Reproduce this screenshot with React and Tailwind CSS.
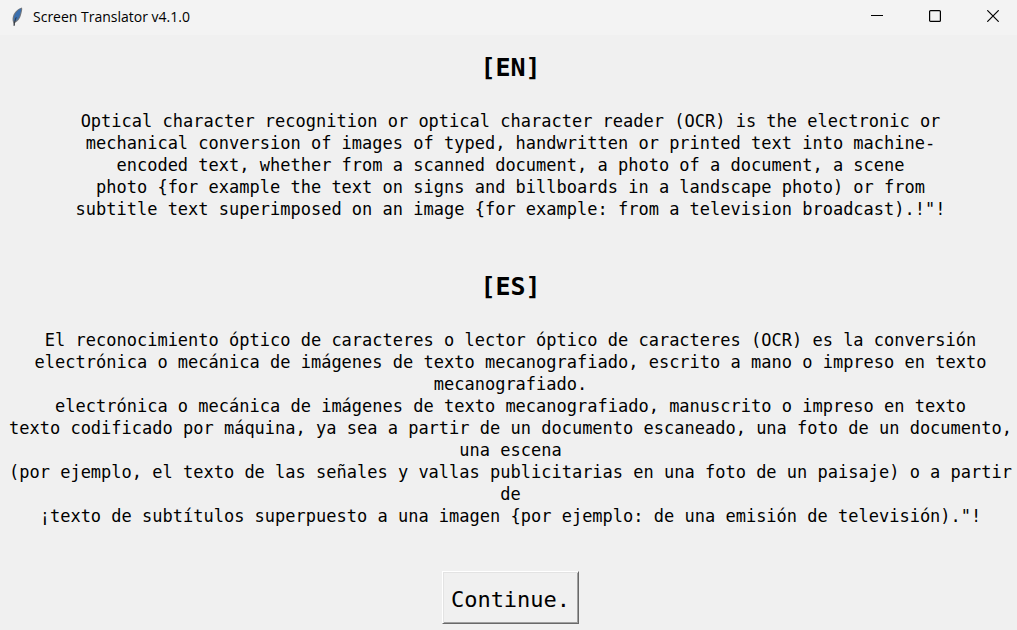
const sections = [
  {
    code: "[EN]",
    lang: "en",
    lines: [
      "Optical character recognition or optical character reader (OCR) is the electronic or",
      "mechanical conversion of images of typed, handwritten or printed text into machine-",
      "encoded text, whether from a scanned document, a photo of a document, a scene",
      "photo {for example the text on signs and billboards in a landscape photo) or from",
      "subtitle text superimposed on an image {for example: from a television broadcast).!\"!",
    ],
  },
  {
    code: "[ES]",
    lang: "es",
    lines: [
      "El reconocimiento óptico de caracteres o lector óptico de caracteres (OCR) es la conversión",
      "electrónica o mecánica de imágenes de texto mecanografiado, escrito a mano o impreso en texto",
      "mecanografiado.",
      "electrónica o mecánica de imágenes de texto mecanografiado, manuscrito o impreso en texto",
      "texto codificado por máquina, ya sea a partir de un documento escaneado, una foto de un documento,",
      "una escena",
      "(por ejemplo, el texto de las señales y vallas publicitarias en una foto de un paisaje) o a partir",
      "de",
      "¡texto de subtítulos superpuesto a una imagen {por ejemplo: de una emisión de televisión).\"!",
    ],
  },
];

function Feather() {
  return (
    <svg className="h-5 w-3" viewBox="0 0 12 20" aria-hidden="true">
      <path d="M11 0.4C7.6 1.2 4 4.2 2.4 8C1.4 10.6 1.3 13 2.1 15.4L3 19.2L4 15.8C6.8 14.6 9.2 11.6 10 8C10.6 5.2 11.7 2.6 11 0.4Z" fill="#74777c" />
      <path d="M10 1.6C7.4 2.6 4.6 5.4 3.4 8.6C2.6 10.8 2.5 12.8 3 14.8C6 13.8 8.2 11 9 7.8C9.5 5.6 10.4 3.6 10 1.6Z" fill="#3a6fae" />
      <path d="M5.2 10.4C4.2 12.6 3.5 15.4 3.1 18.8" fill="none" stroke="#30343a" strokeWidth="1" />
    </svg>
  );
}

function TitleBar() {
  return (
    <header className="flex h-[35px] items-start justify-between bg-[#f3f3f3]">
      <div className="flex h-[34px] items-center gap-2.5 pl-[11px]">
        <Feather />
        <h1 className="font-['Open_Sans','Noto_Sans',sans-serif] text-sm leading-5 whitespace-nowrap">
          Screen Translator v4.1.0
        </h1>
      </div>
      <div className="flex h-8 text-black">
        <button type="button" aria-label="Minimize" className="flex w-[58px] items-center justify-end pr-[18px]">
          <svg className="size-3" viewBox="0 0 12 12" shapeRendering="crispEdges">
            <path d="M0 5.5H12" stroke="currentColor" />
          </svg>
        </button>
        <button type="button" aria-label="Maximize" className="flex w-[58px] items-center justify-end pr-[18px]">
          <svg className="size-3" viewBox="0 0 12 12" fill="none">
            <rect x="0.6" y="0.6" width="10.8" height="10.8" rx="1" stroke="currentColor" strokeWidth="1.2" />
          </svg>
        </button>
        <button type="button" aria-label="Close" className="flex w-[58px] items-center justify-end pr-[18px]">
          <svg className="size-3" viewBox="0 0 12 12" fill="none">
            <path d="M0.3 0.3L11.7 11.7M11.7 0.3L0.3 11.7" stroke="currentColor" strokeWidth="1.2" />
          </svg>
        </button>
      </div>
    </header>
  );
}

export default function App() {
  return (
    <div className="flex min-h-screen flex-col bg-[#f0f0f0] text-black">
      <TitleBar />
      <main className="flex flex-col items-center gap-11 pt-[17px] pl-1 pb-1.5 font-['DejaVu_Sans_Mono','Liberation_Mono',monospace]">
        <div className="flex flex-col gap-[51px] text-center">
          {sections.map((section) => (
            <section key={section.code} lang={section.lang}>
              <h2 className="mb-[26px] text-[25px] leading-8 font-bold">{section.code}</h2>
              <p className="text-[17px] leading-[22px] whitespace-pre">{section.lines.join("\n")}</p>
            </section>
          ))}
        </div>
        <button
          type="button"
          className="h-[53px] border border-t-white border-r-[#696969] border-b-[#696969] border-l-white px-2 pt-1 text-[22px] leading-8 shadow-[inset_1px_1px_0_#e3e3e3,inset_-1px_-1px_0_#a0a0a0]"
        >
          Continue.
        </button>
      </main>
    </div>
  );
}
